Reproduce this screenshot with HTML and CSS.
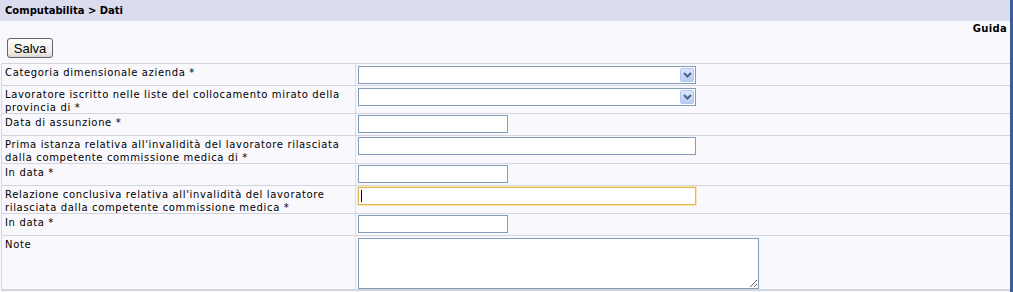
FILE: index.html
```
<!DOCTYPE html>
<html lang="it">
<head>
  <meta charset="UTF-8">
  <title>Computabilita - Dati</title>
  <link rel="stylesheet" href="styles.css">
</head>
<body>
  <div class="page">
    <div class="content">
      <div class="title-bar">Computabilita &gt; Dati</div>
      <div class="help-row"><a class="help-link">Guida</a></div>
      <div class="toolbar">
        <button type="button" class="btn">Salva</button>
      </div>

      <div class="form">
        <div class="row">
          <div class="label">Categoria dimensionale azienda *</div>
          <div class="field">
            <span class="select-wrap">
              <select class="select"></select>
              <span class="select-btn">
                <svg width="9" height="6" viewBox="0 0 9 6"><path d="M1 1 L4.5 4.5 L8 1" fill="none" stroke="#4d6185" stroke-width="2"/></svg>
              </span>
            </span>
          </div>
        </div>
        <div class="row double">
          <div class="label">Lavoratore iscritto nelle liste del collocamento mirato della provincia di *</div>
          <div class="field">
            <span class="select-wrap">
              <select class="select"></select>
              <span class="select-btn">
                <svg width="9" height="6" viewBox="0 0 9 6"><path d="M1 1 L4.5 4.5 L8 1" fill="none" stroke="#4d6185" stroke-width="2"/></svg>
              </span>
            </span>
          </div>
        </div>
        <div class="row">
          <div class="label">Data di assunzione *</div>
          <div class="field"><input type="text" class="input short"></div>
        </div>
        <div class="row double">
          <div class="label">Prima istanza relativa all'invalidità del lavoratore rilasciata dalla competente commissione medica di *</div>
          <div class="field"><input type="text" class="input long"></div>
        </div>
        <div class="row">
          <div class="label">In data *</div>
          <div class="field"><input type="text" class="input short"></div>
        </div>
        <div class="row double">
          <div class="label">Relazione conclusiva relativa all'invalidità del lavoratore rilasciata dalla competente commissione medica *</div>
          <div class="field">
            <span class="focus-wrap">
              <input type="text" class="input long focused">
              <span class="caret"></span>
            </span>
          </div>
        </div>
        <div class="row">
          <div class="label">In data *</div>
          <div class="field"><input type="text" class="input short"></div>
        </div>
        <div class="row note last">
          <div class="label">Note</div>
          <div class="field"><textarea class="textarea"></textarea></div>
        </div>
      </div>
    </div>
    <div class="edge"></div>
  </div>
</body>
</html>
```

FILE: styles.css
```
body {
  margin: 0;
  padding: 0;
  background-color: #f8f8fd;
  font-family: "DejaVu Sans", Verdana, sans-serif;
  font-size: 10px;
  color: #000;
}

.page {
  display: flex;
  height: 292px;
}

.content {
  flex: 1;
}

.edge {
  width: 3px;
  background-color: #3b5da0;
}

.title-bar {
  height: 21px;
  line-height: 22px;
  padding-left: 5px;
  background-color: #dcdcef;
  font-weight: bold;
}

.help-row {
  height: 15px;
  line-height: 16px;
  text-align: right;
  padding-right: 3px;
}

.help-link {
  font-weight: bold;
  color: #000;
  letter-spacing: 0.3px;
}

.toolbar {
  padding: 2px 0 5px 7px;
}

.btn {
  display: block;
  width: 46px;
  height: 20px;
  padding: 0;
  font-family: "Liberation Sans", Arial, sans-serif;
  font-size: 13px;
  color: #000;
  background: linear-gradient(#fdfdfb, #ecebe6 80%, #d8d6cc);
  border: 1px solid #5d6570;
  border-radius: 3px;
}

.form {
  margin-left: 1px;
  border-left: 1px solid #d8d8de;
  border-bottom: 2px solid #d4d4dc;
}

.row {
  display: flex;
  height: 21px;
  border-top: 1px solid #d4d4dc;
}

.row.double {
  height: 27px;
}

.row.note {
  height: 53px;
}

.label {
  width: 350px;
  padding: 2px 0 0 3px;
  line-height: 13px;
  letter-spacing: 0.65px;
  border-right: 1px solid #dcdce2;
}

.field {
  flex: 1;
  padding: 1px 0 0 2px;
}

.input,
.select,
.textarea {
  box-sizing: border-box;
  border: 1px solid #7f9db9;
  background-color: #fff;
  margin: 0;
  font-family: "DejaVu Sans", Verdana, sans-serif;
  font-size: 10px;
}

.input {
  display: block;
  height: 18px;
  padding: 0 2px;
}

.input.short {
  width: 150px;
}

.input.long {
  width: 338px;
}

.input.focused {
  border-color: #e2b64e;
  box-shadow: 0 0 0 1px #fbe6ad;
}

.focus-wrap {
  position: relative;
  display: block;
  width: 338px;
}

.caret {
  position: absolute;
  left: 3px;
  top: 3px;
  width: 1px;
  height: 12px;
  background-color: #000;
}

.select-wrap {
  position: relative;
  display: block;
  width: 338px;
  margin-top: 1px;
}

.select {
  display: block;
  width: 338px;
  height: 18px;
  appearance: none;
  -webkit-appearance: none;
  border-radius: 0;
}

.select-btn {
  position: absolute;
  right: 2px;
  top: 2px;
  width: 14px;
  height: 14px;
  display: flex;
  align-items: center;
  justify-content: center;
  background: linear-gradient(#dbe6fd, #b8ccf6);
  border: 1px solid #b2c5ef;
  box-sizing: border-box;
  border-radius: 2px;
}

.textarea {
  display: block;
  width: 401px;
  height: 51px;
  margin-top: 1px;
  resize: both;
}
```
